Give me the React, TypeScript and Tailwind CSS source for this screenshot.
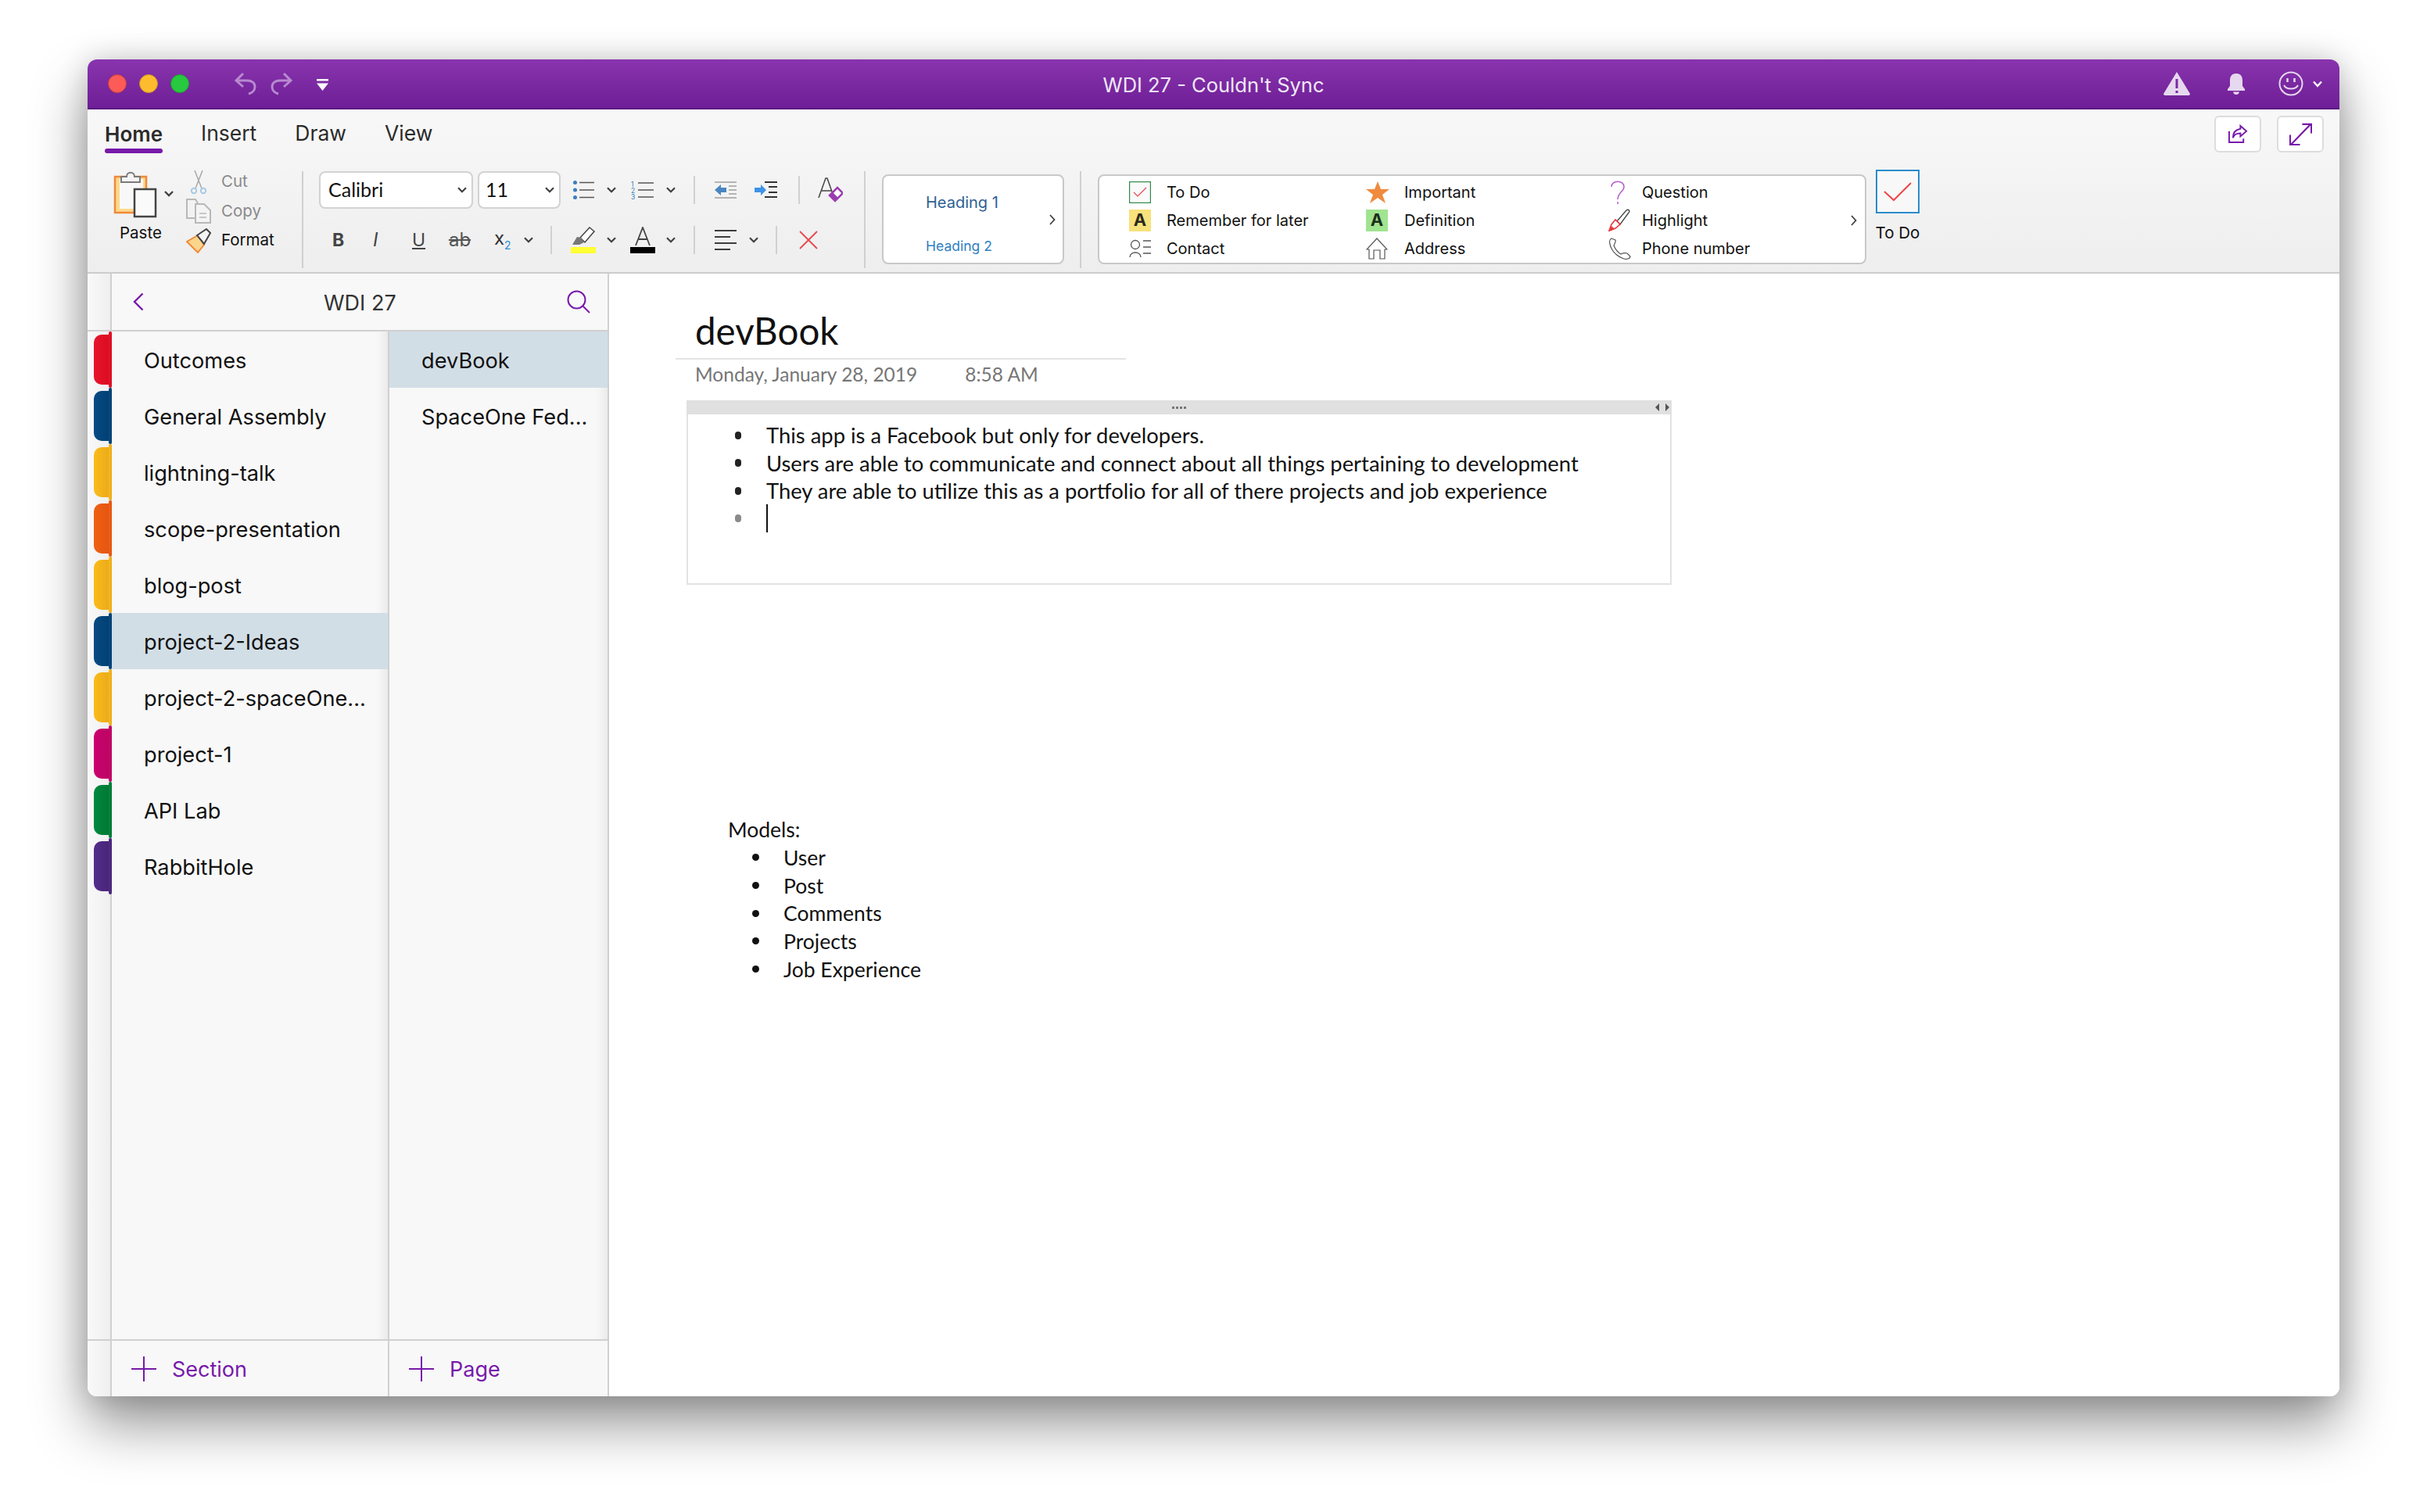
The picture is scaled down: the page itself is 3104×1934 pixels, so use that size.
const sections = [
  { name: "Outcomes", color: "from-[#e8142c] to-[#d80c20]" },
  { name: "General Assembly", color: "from-[#074a84] to-[#003f70]" },
  { name: "lightning-talk", color: "from-[#fbbb18] to-[#e8a81c]" },
  { name: "scope-presentation", color: "from-[#f0600f] to-[#e25314]" },
  { name: "blog-post", color: "from-[#fbbb18] to-[#e8a81c]" },
  { name: "project-2-Ideas", color: "from-[#074a84] to-[#003f70]", active: true },
  { name: "project-2-spaceOne...", color: "from-[#fbbb18] to-[#e8a81c]" },
  { name: "project-1", color: "from-[#cc0070] to-[#b8065f]" },
  { name: "API Lab", color: "from-[#008a3e] to-[#007433]" },
  { name: "RabbitHole", color: "from-[#532c8c] to-[#472474]" },
];

const pages = [
  { name: "devBook", active: true },
  { name: "SpaceOne Fed..." },
];

const notes = [
  "This app is a Facebook but only for developers.",
  "Users are able to communicate and connect about all things pertaining to development",
  "They are able to utilize this as a portfolio for all of there projects and job experience",
];

const models = ["User", "Post", "Comments", "Projects", "Job Experience"];

function Chevron({ className = "" }: { className?: string }) {
  return (
    <svg viewBox="0 0 12 8" className={`w-[12px] h-[8px] shrink-0 ${className}`} fill="none" stroke="#404040" strokeWidth="2.2">
      <path d="M1 1.2 6 6.2 11 1.2" />
    </svg>
  );
}

function Sep({ className = "" }: { className?: string }) {
  return <div className={`w-[2px] h-[36px] shrink-0 bg-[#d0d0d0] ${className}`}></div>;
}

function RightArrow({ className = "" }: { className?: string }) {
  return (
    <svg viewBox="0 0 8 14" className={`w-[8px] h-[14px] shrink-0 ${className}`} fill="none" stroke="#404040" strokeWidth="1.8">
      <path d="M1 1 6.5 7 1 13" />
    </svg>
  );
}

function TagRow({ icon, label, slot }: { icon: React.ReactNode; label: string; slot: string }) {
  return (
    <div className="flex items-center h-[36px]">
      <div className={`${slot} flex items-center`}>{icon}</div>
      <span className="text-[20px] text-[#111]">{label}</span>
    </div>
  );
}

export default function App() {
  return (
    <div className="w-[3104px] h-[1934px] bg-white pl-[112px] pt-[76px] font-['Inter',sans-serif] overflow-hidden">
      <div className="w-[2880px] h-[1710px] rounded-[12px] overflow-hidden flex flex-col bg-white shadow-[0_36px_70px_rgba(0,0,0,0.42),0_0_36px_rgba(0,0,0,0.16)]">
        {/* Title bar */}
        <div className="relative h-[64px] shrink-0 flex items-center bg-gradient-to-b from-[#8934ae] to-[#6e1e96] border-b-2 border-[#5c1a80]">
          <div className="flex items-center gap-[16px] pl-[26px]">
            <div className="w-[24px] h-[24px] rounded-full bg-[#fc5b57] border border-[#c0403c]"></div>
            <div className="w-[24px] h-[24px] rounded-full bg-[#fdbc2e] border border-[#c6902a]"></div>
            <div className="w-[24px] h-[24px] rounded-full bg-[#28c83f] border border-[#1e9a30]"></div>
          </div>
          <svg viewBox="0 0 30 30" className="w-[30px] h-[30px] ml-[57px]" fill="none" stroke="#b88ad0" strokeWidth="3">
            <path d="M12 2 3 11 12 19M3 11H17C23 11 27 14 27 19C27 24 23 27 19 28" />
          </svg>
          <svg viewBox="0 0 30 30" className="w-[30px] h-[30px] ml-[16px]" fill="none" stroke="#b88ad0" strokeWidth="3">
            <path d="M18 2 27 11 18 19M27 11H13C7 11 3 14 3 19C3 24 7 27 11 28" />
          </svg>
          <svg viewBox="0 0 15 15" className="w-[15px] h-[15px] ml-[30px] mt-[3px]">
            <path d="M0 0H15V2.5H0ZM0 5.5H15L7.5 15Z" fill="#fff" />
          </svg>
          <span className="absolute left-0 right-0 pt-[5px] text-center text-[25.5px] text-[#f1e8f6]">WDI 27 - Couldn't Sync</span>
          <svg viewBox="0 0 34 30" className="w-[34px] h-[30px] ml-auto" fill="#e6d8ef">
            <path fillRule="evenodd" d="M17 0 34 28Q34 30 32 30H2Q0 30 0 28ZM15.5 9V21H18.5V9ZM15.5 24V27H18.5V24Z" />
          </svg>
          <svg viewBox="0 0 24 28" className="w-[24px] h-[28px] ml-[47px]" fill="#e6d8ef">
            <path d="M12 1C18 1 20 5 20 10V17L23 21V23H1V21L4 17V10C4 5 6 1 12 1ZM8 24.5H16C15.5 27 14 28 12 28C10 28 8.500 27 8 24.500Z" />
          </svg>
          <svg viewBox="0 0 32 32" className="w-[32px] h-[32px] ml-[42px]" fill="none" stroke="#e6d8ef" strokeWidth="2">
            <circle cx="16" cy="16" r="14.500" />
            <path d="M7 18C10 24 22 24 25 18" />
            <path d="M11.500 9V14M20.500 9V14" strokeWidth="2.600" />
          </svg>
          <svg viewBox="0 0 12 9" className="w-[12px] h-[9px] ml-[12px] mr-[22px]" fill="none" stroke="#fff" strokeWidth="2.400">
            <path d="M1 1.500 6 7 11 1.500" />
          </svg>
        </div>

        {/* Ribbon */}
        <div className="h-[210px] shrink-0 bg-gradient-to-b from-[#f8f8f8] to-[#eeeeee] border-b-2 border-[#cccccc]">
          <div className="h-[65px] flex">
            <div className="flex gap-[49px] pl-[22px] text-[26.5px] text-[#2b2b2b]">
              <div className="relative h-[56px] flex items-end pb-[5px]">
                <span className="font-semibold text-[26px]">Home</span>
                <div className="absolute left-0 right-0 top-[50px] h-[6px] rounded-full bg-[#7719aa]"></div>
              </div>
              <div className="h-[56px] flex items-end pb-[5px]">Insert</div>
              <div className="h-[56px] flex items-end pb-[5px]">Draw</div>
              <div className="h-[56px] flex items-end pb-[5px]">View</div>
            </div>
            <div className="ml-auto flex gap-[20px] pt-[8px] pr-[20px]">
              <div className="w-[60px] h-[47px] bg-white border-2 border-[#dddddd] rounded-[6px] flex items-center justify-center">
                <svg viewBox="0 0 26 26" className="w-[25px] h-[25px]" fill="none" stroke="#7719aa" strokeWidth="2">
                  <path d="M1 9V24H20V19" />
                  <path d="M16 2 24 9 16 16V12C11 12 8 13 6 18C6 11 10 7 16 6Z" />
                </svg>
              </div>
              <div className="w-[60px] h-[47px] bg-white border-2 border-[#dddddd] rounded-[6px] flex items-center justify-center">
                <svg viewBox="0 0 30 30" className="w-[29px] h-[29px]" fill="none" stroke="#7719aa" strokeWidth="2.200">
                  <path d="M2 29 28 2M17 2H29V14M1 16V29H14" />
                </svg>
              </div>
            </div>
          </div>

          <div className="flex items-start pl-[33px] pt-[12px]">
            {/* Paste */}
            <div className="w-[80px] shrink-0 flex flex-col">
              <svg viewBox="0 0 78 62" className="w-[78px] h-[62px]" fill="none">
                <path d="M2 9H42V55H2Z" fill="#fdd98c" stroke="#ef8a3c" strokeWidth="2.500" />
                <path d="M8 12H38V50H8Z" fill="#f8f8f8" />
                <path d="M10 16V9H17C17 2 27 2 27 9H34V16Z" fill="#f5f5f5" stroke="#7a7a7a" strokeWidth="2" />
                <path d="M27 25H54V60H27Z" fill="#fafafa" stroke="#444" strokeWidth="2.500" />
                <path d="M66 28 71 33 76 28" stroke="#404040" strokeWidth="2.400" />
              </svg>
              <span className="text-[20.500px] leading-[26px] mt-[6px] ml-[8px] text-[#111]">Paste</span>
            </div>
            {/* Clipboard commands */}
            <div className="ml-[13px] w-[125px] shrink-0 flex flex-col -mt-[3px]">
              <div className="h-[37px] flex items-center">
                <svg viewBox="0 0 32 32" className="w-[32px] h-[32px]" fill="none" stroke="#a8a8a8" strokeWidth="1.500">
                  <path d="M11 1 20 24M21 1 12 24" />
                  <circle cx="10" cy="27" r="3.200" stroke="#a6cbe6" strokeWidth="2" />
                  <circle cx="22" cy="27" r="3.200" stroke="#a6cbe6" strokeWidth="2" />
                </svg>
                <span className="ml-[13px] text-[20.500px] text-[#8a8a8a]">Cut</span>
              </div>
              <div className="h-[38px] flex items-center">
                <svg viewBox="0 0 32 32" className="w-[32px] h-[32px]" fill="none" stroke="#b8b8b8" strokeWidth="2">
                  <path d="M12 25H1V1H12L15 6" />
                  <path d="M12 7H23L31 15V31H12Z" fill="#f4f4f4" />
                  <path d="M17 19H26M17 24H26" strokeWidth="1.500" />
                </svg>
                <span className="ml-[13px] text-[20.500px] text-[#8a8a8a]">Copy</span>
              </div>
              <div className="h-[37px] flex items-center">
                <svg viewBox="0 0 32 32" className="w-[32px] h-[32px]" fill="none">
                  <path d="M1 17 15 9 23 21 15 31Z" fill="#fbd58c" stroke="#ef8a3c" strokeWidth="2" />
                  <path d="M14 9 26 1 31 6 23 20Z" fill="#f4f4f4" stroke="#444" strokeWidth="2" />
                </svg>
                <span className="ml-[13px] text-[20.500px] text-[#111]">Format</span>
              </div>
            </div>
            <Sep className="ml-[23px] !h-[124px] mt-[2px]" />

            {/* Font and paragraph */}
            <div className="ml-[20px] w-[697px] shrink-0 flex flex-col mt-[2px]">
              <div className="flex items-center h-[48px]">
                <div className="w-[197px] h-[48px] bg-white border-2 border-[#d2d2d2] rounded-[8px] flex items-center pl-[10px] pr-[6px] text-[25px] text-[#111]">
                  <span className="font-['Lato',sans-serif]">Calibri</span>
                  <Chevron className="ml-auto" />
                </div>
                <div className="w-[106px] h-[48px] ml-[6px] bg-white border-2 border-[#d2d2d2] rounded-[8px] flex items-center pl-[8px] pr-[6px] text-[25px] text-[#111]">
                  <span className="font-['Lato',sans-serif]">11</span>
                  <Chevron className="ml-auto" />
                </div>
                <svg viewBox="0 0 28 24" className="w-[28px] h-[24px] ml-[15px]" fill="none">
                  <circle cx="3.500" cy="2.500" r="2.500" fill="#3a7ebf" />
                  <circle cx="3.500" cy="12" r="2.500" fill="#3a7ebf" />
                  <circle cx="3.500" cy="21.500" r="2.500" fill="#3a7ebf" />
                  <path d="M9 2.500H28M9 12H28M9 21.500H28" stroke="#555" strokeWidth="1.300" />
                </svg>
                <Chevron className="ml-[16px]" />
                <svg viewBox="0 0 29 24" className="w-[29px] h-[24px] ml-[19px]" fill="none">
                  <text x="0" y="7.500" fontSize="8.500" fill="#3a7ebf" fontFamily="Inter">1</text>
                  <text x="0" y="15.500" fontSize="8.500" fill="#3a7ebf" fontFamily="Inter">2</text>
                  <text x="0" y="23.500" fontSize="8.500" fill="#3a7ebf" fontFamily="Inter">3</text>
                  <path d="M9 3H29M9 12H29M9 21H29" stroke="#555" strokeWidth="1.300" />
                </svg>
                <Chevron className="ml-[16px]" />
                <Sep className="ml-[23px]" />
                <svg viewBox="0 0 28 22" className="w-[28px] h-[22px] ml-[25px]" fill="none">
                  <path d="M0 1H28M0 21H28M18 6H28M18 11H28M18 16H28" stroke="#777" strokeWidth="1.200" />
                  <path d="M0 11 8 4V8H15V14H8V18Z" fill="#4a86c0" />
                </svg>
                <svg viewBox="0 0 29 22" className="w-[29px] h-[22px] ml-[23px]" fill="none">
                  <path d="M13 1H29M18 7H29M18 14H29M13 20H29" stroke="#333" strokeWidth="2" />
                  <path d="M15 11 8 4V8H0V14H8V18Z" fill="#3e93e6" />
                </svg>
                <Sep className="ml-[27px]" />
                <svg viewBox="0 0 32 32" className="w-[32px] h-[32px] ml-[23px]" fill="none">
                  <path d="M1 26 10 1H12L20 24M5 17H17" stroke="#444" strokeWidth="1.500" />
                  <path d="M15 23 25 13 32 20 22 30Z" fill="#fff" stroke="#9a3db0" strokeWidth="2.500" />
                  <path d="M15 23 19 19 26 26 22 30Z" fill="#9a3db0" />
                </svg>
              </div>
              <div className="flex items-center h-[40px] mt-[20px]">
                <span className="ml-[17px] w-[16px] text-[23px] font-bold text-[#444] leading-none">B</span>
                <span className="ml-[36px] w-[13px] text-[24px] italic text-[#444] leading-none">I</span>
                <span className="ml-[37px] w-[17px] text-[23px] text-[#444] leading-none underline">U</span>
                <span className="ml-[28px] w-[32px] text-center text-[24px] text-[#555] leading-none line-through">ab</span>
                <span className="ml-[28px] w-[23px] text-[24px] text-[#333] leading-none">
                  x<span className="text-[14px] text-[#2d8fd5] align-sub">2</span>
                </span>
                <Chevron className="ml-[15px]" />
                <Sep className="ml-[22px]" />
                <svg viewBox="0 0 32 34" className="w-[32px] h-[34px] ml-[24px]" fill="none">
                  <path d="M12 14 24 1 30 6 18 20Z" fill="#fff" stroke="#444" strokeWidth="1.500" />
                  <path d="M2 23 8 13 13 14 17 20 11 23Z" fill="#777" />
                  <path d="M0 26H32V34H0Z" fill="#ffff33" />
                </svg>
                <Chevron className="ml-[14px]" />
                <svg viewBox="0 0 32 34" className="w-[32px] h-[34px] ml-[18px]" fill="none">
                  <path d="M7 24 16 1 25 24M10 16H22" stroke="#444" strokeWidth="1.800" />
                  <path d="M0 26H32V34H0Z" fill="#000" />
                </svg>
                <Chevron className="ml-[14px]" />
                <Sep className="ml-[23px]" />
                <svg viewBox="0 0 28 26" className="w-[28px] h-[26px] ml-[25px]" fill="none" stroke="#3c3c3c" strokeWidth="2">
                  <path d="M0 1H28M0 9H20M0 17H28M0 25H20" />
                </svg>
                <Chevron className="ml-[16px]" />
                <Sep className="ml-[22px]" />
                <svg viewBox="0 0 24 24" className="w-[24px] h-[24px] ml-[28px]" fill="none" stroke="#e8474c" strokeWidth="1.800">
                  <path d="M1 1 23 23M23 1 1 23" />
                </svg>
              </div>
            </div>
            <Sep className="!h-[124px] mt-[2px]" />

            {/* Styles */}
            <div className="ml-[21px] w-[233px] h-[115px] mt-[6px] shrink-0 bg-white border-2 border-[#c8c8c8] rounded-[8px] flex items-center">
              <div className="pl-[54px] w-[212px] pt-[10px] flex flex-col gap-[30px]">
                <span className="text-[20px] leading-[28px] text-[#2e5f93]">Heading 1</span>
                <span className="text-[17.500px] leading-[24px] text-[#2f7fc1]">Heading 2</span>
              </div>
              <RightArrow />
            </div>
            <Sep className="ml-[20px] !h-[124px] mt-[2px]" />

            {/* Tags */}
            <div className="ml-[21px] w-[983px] h-[115px] mt-[6px] pt-[2px] shrink-0 bg-white border-2 border-[#c8c8c8] rounded-[8px] flex items-center pl-[38px]">
              <div className="w-[303px] flex flex-col">
                <TagRow
                  slot="w-[48px]"
                  label="To Do"
                  icon={
                    <svg viewBox="0 0 28 28" className="w-[28px] h-[28px]" fill="#fafafa" stroke="#2f8a4a" strokeWidth="1.200">
                      <rect x="0.600" y="0.600" width="26.800" height="26.800" />
                      <path d="M6 14 11 19 22 8" fill="none" stroke="#e8474c" />
                    </svg>
                  }
                />
                <TagRow
                  slot="w-[48px]"
                  label="Remember for later"
                  icon={<div className="w-[28px] h-[28px] bg-[#f8e27c] flex items-center justify-center text-[22px] font-bold text-[#2a2a1a]">A</div>}
                />
                <TagRow
                  slot="w-[48px]"
                  label="Contact"
                  icon={
                    <svg viewBox="0 0 28 24" className="w-[28px] h-[24px]" fill="none" stroke="#555" strokeWidth="1.300">
                      <circle cx="8" cy="7" r="5.500" />
                      <path d="M1 23C1 15 15 15 15 23M18 2H28M18 10H28M18 18H28" />
                    </svg>
                  }
                />
              </div>
              <div className="w-[311px] flex flex-col">
                <TagRow
                  slot="w-[49px]"
                  label="Important"
                  icon={
                    <svg viewBox="0 0 30 30" className="w-[30px] h-[30px]" fill="#f08a3e">
                      <path d="M15 1 19 11H30L21 18 25 29 15 22 5 29 9 18 0 11H11Z" />
                    </svg>
                  }
                />
                <TagRow
                  slot="w-[49px]"
                  label="Definition"
                  icon={<div className="w-[28px] h-[28px] bg-[#a0e490] flex items-center justify-center text-[22px] font-bold text-[#1e2e1a]">A</div>}
                />
                <TagRow
                  slot="w-[49px]"
                  label="Address"
                  icon={
                    <svg viewBox="0 0 28 28" className="w-[28px] h-[28px]" fill="none" stroke="#555" strokeWidth="1.200">
                      <path d="M14 1 27 15 24 15V27H18V16H10V27H4V15L1 15Z" />
                    </svg>
                  }
                />
              </div>
              <div className="w-[309px] flex flex-col">
                <TagRow
                  slot="w-[42px]"
                  label="Question"
                  icon={
                    <svg viewBox="0 0 22 30" className="w-[22px] h-[30px]" fill="none" stroke="#b45cc8" strokeWidth="1.500">
                      <path d="M3 8C3 -1 19 -1 19 8C19 14 11 15 11 24M11 27V30" />
                    </svg>
                  }
                />
                <TagRow
                  slot="w-[42px]"
                  label="Highlight"
                  icon={
                    <svg viewBox="0 0 28 30" className="w-[28px] h-[30px] -ml-[1px]" fill="none">
                      <path d="M11 16 23 2C26 0 28 3 26 5L15 20Z" fill="#fff" stroke="#444" strokeWidth="1.300" />
                      <path d="M1 28 4 20 9 14 15 20 9 25Z" fill="#fff" stroke="#e8373c" strokeWidth="1.600" />
                      <path d="M1 29 4 22 8 26Z" fill="#e8373c" />
                    </svg>
                  }
                />
                <TagRow
                  slot="w-[42px]"
                  label="Phone number"
                  icon={
                    <svg viewBox="0 0 28 28" className="w-[28px] h-[28px]" fill="none" stroke="#555" strokeWidth="1.200">
                      <path d="M3 1 8 3C9 5 7 8 6 10C8 15 11 19 15 21C17 20 20 19 23 20L27 24C27 27 22 28 19 27C10 24 3 17 1 8C0 5 1 2 3 1Z" />
                    </svg>
                  }
                />
              </div>
              <RightArrow />
            </div>

            {/* To Do button */}
            <div className="ml-[10px] w-[60px] shrink-0 flex flex-col items-center">
              <div className="w-[56px] h-[56px] bg-[#f8f8f8] border-2 border-[#2a8ccc] flex items-center justify-center">
                <svg viewBox="0 0 36 26" className="w-[36px] h-[26px]" fill="none" stroke="#ee4448" strokeWidth="2">
                  <path d="M1 13 13 24 35 2" />
                </svg>
              </div>
              <span className="text-[20.500px] leading-[26px] mt-[12px] text-[#111]">To Do</span>
            </div>
          </div>
        </div>

        {/* Body */}
        <div className="flex-1 flex min-h-0">
          <aside className="w-[667px] shrink-0 flex flex-col bg-[#f8f8f8] border-r-2 border-[#d0d0d0]">
            <div className="h-[74px] shrink-0 flex items-center border-b-2 border-[#d0d0d0]">
              <div className="w-[31px] h-full shrink-0 bg-gradient-to-r from-[#f9f9f9] to-[#efefef] border-r-2 border-[#d0d0d0]"></div>
              <svg viewBox="0 0 14 24" className="w-[14px] h-[24px] ml-[27px]" fill="none" stroke="#7719aa" strokeWidth="2.400">
                <path d="M12.500 1.500 2 12 12.500 22.500" />
              </svg>
              <span className="ml-[230px] pt-[4px] text-[27px] text-[#333]">WDI 27</span>
              <svg viewBox="0 0 30 30" className="w-[30px] h-[30px] ml-auto mr-[22px]" fill="none" stroke="#7719aa" strokeWidth="2">
                <circle cx="12.500" cy="12.500" r="11" />
                <path d="M20 20 29 29" />
              </svg>
            </div>

            <div className="flex-1 flex min-h-0">
              <div className="w-[31px] shrink-0 flex flex-col bg-gradient-to-r from-[#f9f9f9] to-[#efefef] border-r-2 border-[#d0d0d0]">
                {sections.map((s) => (
                  <div key={s.name} className="relative h-[72px] w-[23px] ml-[8px] shrink-0">
                    <div className={`h-[64px] mt-[4px] rounded-l-[10px] bg-gradient-to-r ${s.color}`}></div>
                    <div className={`absolute top-0 right-0 w-[4px] h-[72px] rounded-[3px] bg-gradient-to-r ${s.color}`}></div>
                  </div>
                ))}
              </div>
              <div className="w-[355px] shrink-0 flex flex-col border-r-2 border-[#d0d0d0] shadow-[inset_-14px_0_14px_-10px_rgba(0,0,0,0.08)]">
                {sections.map((s) => (
                  <div key={s.name} className={`h-[72px] shrink-0 flex items-center pl-[41px] pt-[5px] text-[27.2px] text-[#111] ${s.active ? "bg-[#d2dee6]" : ""}`}>
                    {s.name}
                  </div>
                ))}
              </div>
              <div className="flex-1 flex flex-col shadow-[inset_-14px_0_14px_-10px_rgba(0,0,0,0.08)]">
                {pages.map((p) => (
                  <div key={p.name} className={`h-[72px] shrink-0 flex items-center pl-[41px] pt-[5px] text-[27.2px] text-[#111] ${p.active ? "bg-[#d2dee6]" : ""}`}>
                    {p.name}
                  </div>
                ))}
              </div>
            </div>

            <div className="h-[73px] shrink-0 flex border-t-2 border-[#d0d0d0]">
              <div className="w-[31px] shrink-0 bg-gradient-to-r from-[#f9f9f9] to-[#efefef] border-r-2 border-[#d0d0d0]"></div>
              <div className="w-[355px] shrink-0 flex items-center pl-[25px] border-r-2 border-[#d0d0d0] text-[27px] text-[#7719aa]">
                <svg viewBox="0 0 32 32" className="w-[32px] h-[32px]" fill="none" stroke="#7719aa" strokeWidth="2">
                  <path d="M16 0V32M0 16H32" />
                </svg>
                <span className="ml-[20px] pt-[3px]">Section</span>
              </div>
              <div className="flex-1 flex items-center pl-[25px] text-[27px] text-[#7719aa]">
                <svg viewBox="0 0 32 32" className="w-[32px] h-[32px]" fill="none" stroke="#7719aa" strokeWidth="2">
                  <path d="M16 0V32M0 16H32" />
                </svg>
                <span className="ml-[20px] pt-[3px]">Page</span>
              </div>
            </div>
          </aside>

          {/* Page content */}
          <main className="flex-1 bg-white font-['Lato',sans-serif]">
            <div className="ml-[85px] w-[576px] h-[110px] flex items-end pl-[25px] pb-[5px] border-b-2 border-[#e4e4e4]">
              <h1 className="text-[47.5px] leading-[60px] text-[#111]">devBook</h1>
            </div>
            <div className="ml-[110px] h-[36px] mt-[1px] flex items-center text-[24.5px] text-[#767676]">
              <span>Monday, January 28, 2019</span>
              <span className="ml-[61px]">8:58 AM</span>
            </div>
            <div className="ml-[99px] mt-[15px] w-[1260px] h-[236px] border-2 border-t-0 border-[#e2e2e2] flex flex-col">
              <div className="h-[18px] shrink-0 -mx-[2px] bg-[#e0e0e0] relative flex items-center justify-center gap-[2px]">
                <i className="w-[3px] h-[3px] bg-[#777]"></i>
                <i className="w-[3px] h-[3px] bg-[#777]"></i>
                <i className="w-[3px] h-[3px] bg-[#777]"></i>
                <i className="w-[3px] h-[3px] bg-[#777]"></i>
                <svg viewBox="0 0 18 10" className="absolute right-[3px] w-[18px] h-[10px]" fill="#555">
                  <path d="M5 0V10L0 5ZM13 0V10L18 5Z" />
                </svg>
              </div>
              <ul className="pt-[9px] text-[27.4px] leading-[35.500px] text-[#111]">
                {notes.map((n) => (
                  <li key={n} className="flex items-center h-[35.500px]">
                    <i className="w-[8px] h-[10px] rounded-full bg-[#222] ml-[60px]"></i>
                    <span className="ml-[32px]">{n}</span>
                  </li>
                ))}
                <li className="flex items-center h-[35.500px]">
                  <i className="w-[8px] h-[10px] rounded-full bg-[#8a8a8a] ml-[60px]"></i>
                  <i className="w-[2px] h-[36px] bg-[#111] ml-[32px]"></i>
                </li>
              </ul>
            </div>
            <div className="ml-[152px] mt-[295px] text-[26.5px] leading-[36px] text-[#111]">
              <div>Models:</div>
              <ul>
                {models.map((m) => (
                  <li key={m} className="flex items-center h-[35.700px]">
                    <i className="w-[9px] h-[9px] rounded-full bg-[#111] ml-[31px]"></i>
                    <span className="ml-[31px]">{m}</span>
                  </li>
                ))}
              </ul>
            </div>
          </main>
        </div>
      </div>
    </div>
  );
}
